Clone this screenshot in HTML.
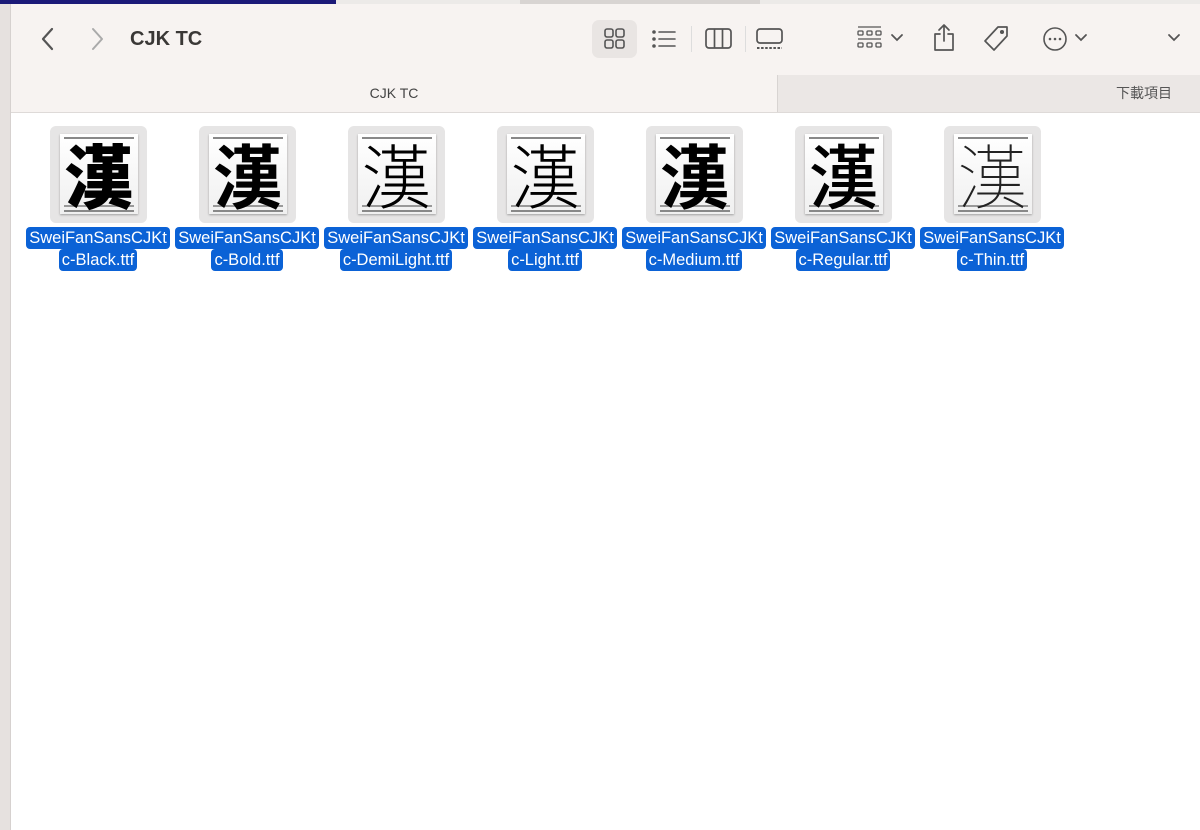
<!DOCTYPE html>
<html><head><meta charset="utf-8"><style>
*{margin:0;padding:0;box-sizing:border-box}
body{width:1200px;height:830px;overflow:hidden;background:#fff;font-family:"Liberation Sans","Noto Sans CJK TC",sans-serif;position:relative}
.top{position:absolute;left:0;top:0;width:1200px;height:4px;background:#eceae8}
.top .a{position:absolute;left:0;top:0;width:336px;height:4px;background:#1b1a78}
.top .b{position:absolute;left:520px;top:0;width:240px;height:4px;background:#d8d4d2}
.side{position:absolute;left:0;top:4px;width:11px;height:826px;background:#e6e1df;border-right:1px solid #d6d1cf}
.tb{position:absolute;left:11px;top:4px;width:1189px;height:109px;background:#f7f3f1;border-bottom:1px solid #dedad8}
.title{position:absolute;left:130px;top:28px;font-size:20px;font-weight:bold;color:#3a3836}
.tab1{position:absolute;left:11px;top:75px;width:766px;height:37px;text-align:center;line-height:37px;font-size:14px;color:#444}
.tab2{position:absolute;left:777px;top:75px;width:423px;height:37px;background:#ebe7e5;border-left:1px solid #d8d4d2;text-align:right;padding-right:28px;line-height:37px;font-size:14px;color:#555}
svg.i{position:absolute}
.item{position:absolute;top:126px;width:150px;text-align:center}
.tile{margin:0 auto;width:97px;height:97px;background:#e6e5e5;border-radius:6px;position:relative}
.inner{position:absolute;left:10px;top:8px;width:78px;height:80px;background:linear-gradient(#fff,#f0f0f0);box-shadow:0 1px 2px rgba(0,0,0,.3);overflow:hidden}
.inner .l{position:absolute;left:4px;right:4px;height:2px;background:#888}
.inner .g{position:absolute;left:-10px;right:-10px;top:0;font-size:70px;line-height:80px;color:#000;font-family:"Noto Sans CJK TC",sans-serif}
.lab{margin-top:4px;font-size:16.5px;color:#fff;line-height:22px;white-space:nowrap;margin-left:-10px;margin-right:-10px}
.lab span{background:#0b62d6;border-radius:4px;padding:0 3px;display:inline-block}
</style></head><body>
<div class="top"><div class="a"></div><div class="b"></div></div>
<div class="side"></div>
<div class="tb"></div>
<svg class="i" style="left:38px;top:26px" width="20" height="26" viewBox="0 0 20 26"><path d="M14 3 L5 13 L14 23" fill="none" stroke="#555" stroke-width="2.2" stroke-linecap="round" stroke-linejoin="round"/></svg>
<svg class="i" style="left:87px;top:26px" width="20" height="26" viewBox="0 0 20 26"><path d="M6 3 L15 13 L6 23" fill="none" stroke="#aaa" stroke-width="2" stroke-linecap="round" stroke-linejoin="round"/></svg>
<div class="title">CJK TC</div>
<div style="position:absolute;left:592px;top:20px;width:45px;height:38px;background:#e9e5e3;border-radius:7px"></div>
<svg class="i" style="left:600px;top:24px" width="30" height="30" viewBox="0 0 30 30" fill="none" stroke="#555" stroke-width="1.6"><rect x="5" y="5" width="8" height="8" rx="2"/><rect x="16" y="5" width="8" height="8" rx="2"/><rect x="5" y="16" width="8" height="8" rx="2"/><rect x="16" y="16" width="8" height="8" rx="2"/></svg>
<svg class="i" style="left:648px;top:24px" width="32" height="30" viewBox="0 0 32 30" fill="none" stroke="#555" stroke-width="1.6" stroke-linecap="round"><circle cx="6" cy="8" r="1" fill="#555"/><circle cx="6" cy="15" r="1" fill="#555"/><circle cx="6" cy="22" r="1" fill="#555"/><path d="M11 8H27M11 15H27M11 22H27"/></svg>
<div style="position:absolute;left:691px;top:26px;width:1px;height:26px;background:#ddd"></div>
<svg class="i" style="left:703px;top:24px" width="32" height="30" viewBox="0 0 32 30" fill="none" stroke="#555" stroke-width="1.7"><rect x="3" y="5" width="25" height="19" rx="3"/><path d="M11.5 5V24M19.5 5V24"/></svg>
<div style="position:absolute;left:745px;top:26px;width:1px;height:26px;background:#ddd"></div>
<svg class="i" style="left:754px;top:24px" width="32" height="30" viewBox="0 0 32 30" fill="none" stroke="#555" stroke-width="1.7"><rect x="3" y="5" width="25" height="14" rx="3"/><path d="M3 24H28" stroke-dasharray="2.5 1.6" stroke-width="2"/></svg>
<svg class="i" style="left:854px;top:24px" width="32" height="30" viewBox="0 0 32 30" fill="none" stroke="#555" stroke-width="1.3"><path d="M4 3H27M4 15H27"/><rect x="4" y="7" width="5" height="4" rx="1"/><rect x="13" y="7" width="5" height="4" rx="1"/><rect x="22" y="7" width="5" height="4" rx="1"/><rect x="4" y="19" width="5" height="4" rx="1"/><rect x="13" y="19" width="5" height="4" rx="1"/><rect x="22" y="19" width="5" height="4" rx="1"/></svg>
<svg class="i" style="left:890px;top:32px" width="14" height="12" viewBox="0 0 14 12"><path d="M2 3L7 8L12 3" fill="none" stroke="#555" stroke-width="1.8" stroke-linecap="round"/></svg>
<svg class="i" style="left:930px;top:22px" width="28" height="32" viewBox="0 0 28 32" fill="none" stroke="#555" stroke-width="1.7" stroke-linecap="round" stroke-linejoin="round"><path d="M14 3V19M9 8L14 3L19 8"/><path d="M10 12H5V28H23V12H18"/></svg>
<svg class="i" style="left:980px;top:22px" width="34" height="34" viewBox="0 0 34 34" fill="none" stroke="#555" stroke-width="1.7" stroke-linejoin="round"><path d="M18 5H27V14L14 28L5 19Z"/><circle cx="22" cy="10" r="1.2" fill="#555"/></svg>
<svg class="i" style="left:1040px;top:25px" width="30" height="30" viewBox="0 0 30 30" fill="none" stroke="#555" stroke-width="1.6"><circle cx="15" cy="14" r="11"/><circle cx="10" cy="14" r="1.3" fill="#555" stroke="none"/><circle cx="15" cy="14" r="1.3" fill="#555" stroke="none"/><circle cx="20" cy="14" r="1.3" fill="#555" stroke="none"/></svg>
<svg class="i" style="left:1074px;top:32px" width="14" height="12" viewBox="0 0 14 12"><path d="M2 3L7 8L12 3" fill="none" stroke="#555" stroke-width="1.8" stroke-linecap="round"/></svg>
<svg class="i" style="left:1167px;top:32px" width="14" height="12" viewBox="0 0 14 12"><path d="M2 3L7 8L12 3" fill="none" stroke="#555" stroke-width="1.8" stroke-linecap="round"/></svg>
<div class="tab1">CJK TC</div>
<div class="tab2">下載項目</div>

<div class="item" style="left:23px"><div class="tile"><div class="inner"><div class="l" style="top:3px"></div><div class="l" style="top:71px;background:#999"></div><div class="l" style="top:76px"></div><div class="g" style="font-weight:900">漢</div></div></div><div class="lab"><span>SweiFanSansCJKt</span><br><span>c-Black.ttf</span></div></div>
<div class="item" style="left:172px"><div class="tile"><div class="inner"><div class="l" style="top:3px"></div><div class="l" style="top:71px;background:#999"></div><div class="l" style="top:76px"></div><div class="g" style="font-weight:700">漢</div></div></div><div class="lab"><span>SweiFanSansCJKt</span><br><span>c-Bold.ttf</span></div></div>
<div class="item" style="left:321px"><div class="tile"><div class="inner"><div class="l" style="top:3px"></div><div class="l" style="top:71px;background:#999"></div><div class="l" style="top:76px"></div><div class="g" style="font-weight:300">漢</div></div></div><div class="lab"><span>SweiFanSansCJKt</span><br><span>c-DemiLight.ttf</span></div></div>
<div class="item" style="left:470px"><div class="tile"><div class="inner"><div class="l" style="top:3px"></div><div class="l" style="top:71px;background:#999"></div><div class="l" style="top:76px"></div><div class="g" style="font-weight:200">漢</div></div></div><div class="lab"><span>SweiFanSansCJKt</span><br><span>c-Light.ttf</span></div></div>
<div class="item" style="left:619px"><div class="tile"><div class="inner"><div class="l" style="top:3px"></div><div class="l" style="top:71px;background:#999"></div><div class="l" style="top:76px"></div><div class="g" style="font-weight:600">漢</div></div></div><div class="lab"><span>SweiFanSansCJKt</span><br><span>c-Medium.ttf</span></div></div>
<div class="item" style="left:768px"><div class="tile"><div class="inner"><div class="l" style="top:3px"></div><div class="l" style="top:71px;background:#999"></div><div class="l" style="top:76px"></div><div class="g" style="font-weight:500">漢</div></div></div><div class="lab"><span>SweiFanSansCJKt</span><br><span>c-Regular.ttf</span></div></div>
<div class="item" style="left:917px"><div class="tile"><div class="inner"><div class="l" style="top:3px"></div><div class="l" style="top:71px;background:#999"></div><div class="l" style="top:76px"></div><div class="g" style="font-weight:100;color:#222">漢</div></div></div><div class="lab"><span>SweiFanSansCJKt</span><br><span>c-Thin.ttf</span></div></div>
</body></html>
